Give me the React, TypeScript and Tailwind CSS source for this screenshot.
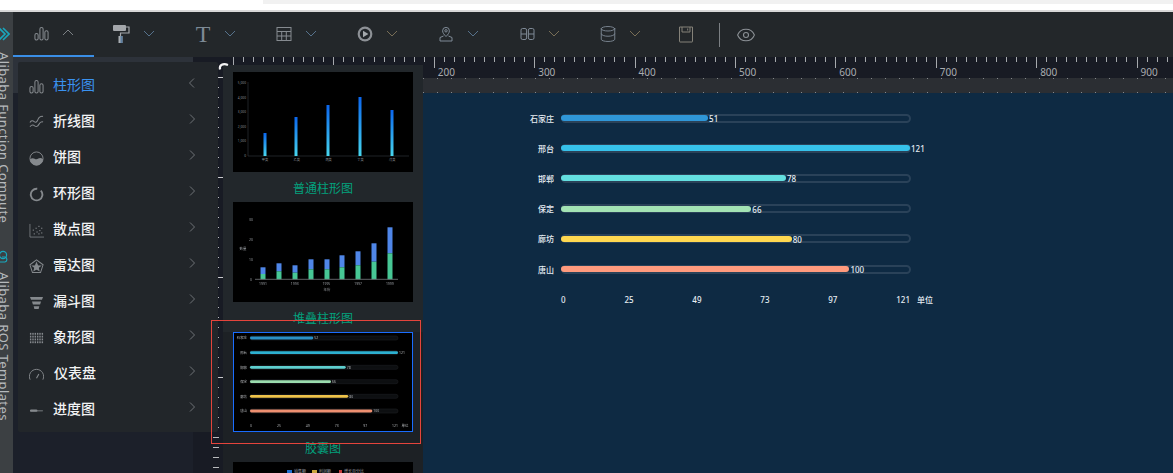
import { Database, Eye } from "lucide-react";

const cities = [
  { name: "石家庄", value: 51, color: "#2f97d8" },
  { name: "邢台", value: 121, color: "#36c1ea" },
  { name: "邯郸", value: 78, color: "#63dfe0" },
  { name: "保定", value: 66, color: "#a3e3b4" },
  { name: "廊坊", value: 80, color: "#ffd850" },
  { name: "唐山", value: 100, color: "#ff9a7d" },
];

const axis = ["0", "25", "49", "73", "97", "121"];

function Chevron({ dir, color = "#62727f" }: { dir: "up" | "down" | "left" | "right"; color?: string }) {
  const d = {
    up: "M2 9 L7 4 L12 9",
    down: "M2 5 L7 10 L12 5",
    left: "M9 2.5 L4.5 7 L9 11.5",
    right: "M5 2.5 L9.5 7 L5 11.5",
  }[dir];
  return (
    <svg width="14" height="14" viewBox="0 0 14 14" fill="none" stroke={color} strokeWidth="1">
      <path d={d} />
    </svg>
  );
}

function BarsIcon({ size = 16, color = "#8f9498" }: { size?: number; color?: string }) {
  return (
    <svg width={size} height={size} viewBox="0 0 16 16" fill="none" stroke={color} strokeWidth="1.1">
      <rect x="1" y="8" width="3.4" height="7" rx="1.7" />
      <rect x="6.3" y="1.5" width="3.4" height="13.5" rx="1.7" />
      <rect x="11.6" y="5" width="3.4" height="10" rx="1.7" />
    </svg>
  );
}

function RollerIcon() {
  return (
    <svg width="20" height="20" viewBox="0 0 20 20" fill="none">
      <rect x="1" y="1" width="13" height="6" rx="1" fill="#a4a7ab" />
      <path d="M14 3 H17 V9 H8.5 V12" stroke="#a4a7ab" strokeWidth="1.2" />
      <rect x="6.5" y="12" width="4" height="7" fill="#a8adb2" />
      <rect x="8.5" y="12" width="2" height="7" fill="#5c7ea0" />
    </svg>
  );
}

function TableIcon() {
  return (
    <svg width="16" height="16" viewBox="0 0 16 16" fill="none" stroke="#868b90" strokeWidth="1">
      <rect x="1" y="1.5" width="14" height="13" />
      <path d="M1 5.5 H15 M1 10 H15 M5.7 5.5 V14.5 M10.3 5.5 V14.5" />
    </svg>
  );
}

function PlayIcon() {
  return (
    <svg width="16" height="16" viewBox="0 0 16 16">
      <circle cx="8" cy="8" r="7.4" fill="#8d9196" />
      <circle cx="8" cy="8" r="5.2" fill="#22262a" />
      <path d="M6 4.8 L11.4 8 L6 11.2 Z" fill="#a5a9ad" />
    </svg>
  );
}

function PinIcon() {
  return (
    <svg width="16" height="16" viewBox="0 0 16 16" fill="none" stroke="#7f8a96" strokeWidth="1">
      <path d="M8 10.5 C6 8.5 4.6 6.8 4.6 4.8 A3.4 3.4 0 0 1 11.4 4.8 C11.4 6.8 10 8.5 8 10.5 Z" />
      <circle cx="8" cy="4.8" r="1.2" />
      <path d="M5.5 10 L2 11.5 V15 H14 V11.5 L10.5 10" />
    </svg>
  );
}

function DigitsIcon() {
  return (
    <svg width="15" height="16" viewBox="0 0 15 16" fill="none" stroke="#7f8a96" strokeWidth="1">
      <rect x="1" y="2.5" width="5.6" height="11" rx="1.6" />
      <path d="M1 8 H6.6" />
      <rect x="8.4" y="2.5" width="5.6" height="11" rx="1.6" />
      <path d="M8.4 8 H14" />
    </svg>
  );
}

function SaveIcon() {
  return (
    <svg width="16" height="17" viewBox="0 0 16 17" fill="none" stroke="#858279" strokeWidth="1">
      <path d="M1.5 1 H14.5 V15.5 Q14.5 16 14 16 H2 Q1.5 16 1.5 15.5 Z" />
      <path d="M4 1 V6 H12 V1 M9.7 2.5 V4.5" />
    </svg>
  );
}

function MenuIcon({ name }: { name: string }) {
  const c = "#85898d";
  if (name === "bar") return <BarsIcon size={15} color={c} />;
  const parts: Record<string, React.ReactNode> = {
    line: (
      <g fill="none" stroke={c} strokeWidth="1.1">
        <path d="M1 8 Q3 5 5.5 7 T9.5 5 T15 1.5" />
        <path d="M1 12.5 Q3.5 9.5 6 11.5 T10.5 10 T15 7.5" />
      </g>
    ),
    pie: (
      <g>
        <circle cx="8" cy="8" r="7" fill="none" stroke={c} strokeWidth="1" />
        <path d="M1 8.5 Q4 7 6 8.2 T10 8 T15 8.5 A7 7 0 0 1 1 8.5 Z" fill={c} />
      </g>
    ),
    ring: <path d="M12.6 3.8 A6.2 6.2 0 1 1 8.8 1.9" fill="none" stroke={c} strokeWidth="2" />,
    scatter: (
      <g fill={c}>
        <path d="M1 1 V15 H16" fill="none" stroke={c} strokeWidth="0.8" />
        <rect x="4" y="7" width="1.2" height="1.2" />
        <rect x="7" y="5" width="1.2" height="1.2" />
        <rect x="10" y="3" width="1.2" height="1.2" />
        <rect x="13" y="5" width="1.2" height="1.2" />
        <rect x="5" y="11" width="1.2" height="1.2" />
        <rect x="8" y="9" width="1.2" height="1.2" />
        <rect x="11" y="7.5" width="1.2" height="1.2" />
        <rect x="13" y="10" width="1.2" height="1.2" />
        <rect x="10" y="11" width="1.2" height="1.2" />
      </g>
    ),
    radar: (
      <g fill="none" stroke={c} strokeWidth="1.1">
        <path d="M8 1 L15 6.2 L12.3 14.5 H3.7 L1 6.2 Z" />
        <path d="M8 4.2 L9.2 7.2 L12.2 7.4 L9.8 9.3 L10.6 12.2 L8 10.6 L5.4 12.2 L6.2 9.3 L3.8 7.4 L6.8 7.2 Z" fill={c} />
      </g>
    ),
    funnel: (
      <g fill={c}>
        <path d="M1 2 H15 L13.8 5 H2.2 Z" />
        <path d="M3.2 7 H12.8 L11.8 10 H4.2 Z" />
        <path d="M5 12 H11 L10.3 15 H5.7 Z" />
      </g>
    ),
    picto: (
      <g fill={c}>
        {[2, 5, 8, 11].flatMap((y) =>
          [1, 3.5, 6, 8.5, 11, 13.5].map((x) => <rect key={`${x}-${y}`} x={x} y={y} width="1.5" height="2" />),
        )}
      </g>
    ),
    gauge: (
      <g fill="none" stroke={c} strokeWidth="1">
        <path d="M1.2 13.5 A7.6 7.6 0 1 1 14.8 13.5" />
        <path d="M8 12 L10.5 7.5" strokeWidth="1.2" />
      </g>
    ),
    progress: (
      <g>
        <rect x="1" y="7.5" width="14" height="1.5" rx="0.7" fill="#5a5e62" />
        <rect x="1" y="7" width="8" height="2.4" rx="1.2" fill={c} />
      </g>
    ),
  };
  return (
    <svg width="15" height="15" viewBox="0 0 16 16">
      {parts[name]}
    </svg>
  );
}

const menu = [
  { label: "柱形图", icon: "bar" },
  { label: "折线图", icon: "line" },
  { label: "饼图", icon: "pie" },
  { label: "环形图", icon: "ring" },
  { label: "散点图", icon: "scatter" },
  { label: "雷达图", icon: "radar" },
  { label: "漏斗图", icon: "funnel" },
  { label: "象形图", icon: "picto" },
  { label: "仪表盘", icon: "gauge" },
  { label: "进度图", icon: "progress" },
];

function ToolItem({ icon, active, chevron = "#62727f" }: { icon: React.ReactNode; active?: boolean; chevron?: string }) {
  return (
    <div className={active ? "flex h-full w-[81px] items-center border-b-2 border-[#3a8ee6] pl-[18px]" : "flex h-full w-[81px] items-center border-b-2 border-transparent pl-[18px]"}>
      <div className="flex w-[20px] justify-center">{icon}</div>
      <div className="ml-[10px] mb-[2px]">
        <Chevron dir={active ? "up" : "down"} color={active ? "#7c8185" : chevron} />
      </div>
    </div>
  );
}

function NormalBarThumb() {
  const bars = [
    { x: 32, top: 61 },
    { x: 63, top: 45 },
    { x: 95, top: 33 },
    { x: 127, top: 25 },
    { x: 159, top: 38 },
  ];
  return (
    <svg width="180" height="100" viewBox="0 0 180 100" className="block bg-black">
      <defs>
        <linearGradient id="thumbBar" x1="0" y1="0" x2="0" y2="1">
          <stop offset="0" stopColor="#0b66ee" />
          <stop offset="1" stopColor="#47d6ee" />
        </linearGradient>
      </defs>
      <path d="M15 10 V84 H176" fill="none" stroke="#2b3138" strokeWidth="0.7" />
      {["5,000", "4,000", "3,000", "2,000", "1,000", "0"].map((t, i) => (
        <text key={t} x="13" y={12 + i * 14.6} textAnchor="end" fontSize="3.2" fill="#8a8f95">
          {t}
        </text>
      ))}
      {bars.map((b) => (
        <rect key={b.x} x={b.x - 1.5} y={b.top} width="3" height={84 - b.top} fill="url(#thumbBar)" />
      ))}
      {["甲类", "乙类", "丙类", "丁类", "戊类"].map((t, i) => (
        <text key={t} x={32 + i * 31.8} y="89" textAnchor="middle" fontSize="3.2" fill="#8a8f95">
          {t}
        </text>
      ))}
    </svg>
  );
}

function StackBarThumb() {
  const bars = [
    [30, 65.3, 72],
    [46, 61.3, 69.3],
    [62, 63.3, 70.7],
    [78, 57.3, 67.3],
    [94, 57.3, 67.3],
    [109, 53.3, 65.3],
    [125, 49.3, 63.3],
    [141, 41.3, 59.7],
    [157, 25.3, 51.3],
  ];
  return (
    <svg width="180" height="100" viewBox="0 0 180 100" className="block bg-black blur-[0.4px]">
      {["30", "20", "10", "0"].map((t, i) => (
        <text key={t} x="18" y={18.5 + i * 20} textAnchor="middle" fontSize="3.4" fill="#9a9ea3">
          {t}
        </text>
      ))}
      <text x="10" y="48" textAnchor="middle" fontSize="3.4" fill="#9a9ea3">
        数量
      </text>
      {bars.map(([x, top, mid]) => (
        <g key={x}>
          <rect x={x - 2.5} y={top} width="5" height={mid - top} fill="#4f86e8" />
          <rect x={x - 2.5} y={mid} width="5" height={77.3 - mid} fill="#47c795" />
        </g>
      ))}
      <path d="M22 77.3 H165" stroke="#777b80" strokeWidth="0.8" />
      {["1991", "1993", "1995", "1997", "1999"].map((t, i) => (
        <text key={t} x={30 + i * 31.7} y="83" textAnchor="middle" fontSize="3.4" fill="#9a9ea3">
          {t}
        </text>
      ))}
      <text x="94" y="89" textAnchor="middle" fontSize="3.4" fill="#9a9ea3">
        年份
      </text>
    </svg>
  );
}

function CapsuleThumb() {
  const rows = [
    { name: "石家庄", end: 80.3, c: "#2a8fc5", y: 6 },
    { name: "邢台", end: 165, c: "#2db0d0", y: 20.7 },
    { name: "邯郸", end: 112.7, c: "#5fcfcf", y: 35.3 },
    { name: "保定", end: 98, c: "#9bdcae", y: 49.7 },
    { name: "廊坊", end: 115.3, c: "#eec24a", y: 64.3 },
    { name: "唐山", end: 139.3, c: "#ee8f70", y: 79 },
  ];
  return (
    <svg width="178" height="98" viewBox="1 1 178 98" className="block bg-black blur-[0.4px]">
      {rows.map((r) => (
        <g key={r.name}>
          <text x="14" y={r.y + 1.2} textAnchor="end" fontSize="3.4" fill="#b0b3b6">
            {r.name}
          </text>
          <rect x="17" y={r.y - 2} width="148" height="4" rx="2" fill="#0d0f11" stroke="#1c1f22" strokeWidth="0.6" />
          <rect x="17" y={r.y - 1.4} width={r.end - 17} height="2.8" rx="1.4" fill={r.c} />
          <text x={r.end + 1} y={r.y + 1.2} fontSize="3.4" fill="#b0b3b6">
            {Math.round(((r.end - 17) / 148) * 121)}
          </text>
        </g>
      ))}
      {[18, 46, 74.7, 103.7, 132.3, 162].map((x, i) => (
        <text key={x} x={x} y="95" textAnchor="middle" fontSize="3.4" fill="#b0b3b6">
          {axis[i]}
        </text>
      ))}
      <text x="172" y="95" textAnchor="middle" fontSize="3.4" fill="#b0b3b6">
        单位
      </text>
    </svg>
  );
}

function LegendThumb() {
  return (
    <svg width="180" height="100" viewBox="0 0 180 100" className="block bg-black">
      <rect x="54" y="8" width="5" height="3" fill="#1f6fd0" />
      <text x="61" y="11" fontSize="4" fill="#9a9ea3">
        销售额
      </text>
      <rect x="79" y="8" width="5" height="3" fill="#c9a53c" />
      <text x="86" y="11" fontSize="4" fill="#9a9ea3">
        利润额
      </text>
      <rect x="106" y="8" width="3" height="3" fill="#c23b3b" />
      <text x="111" y="11" fontSize="4" fill="#9a9ea3">
        增长百分比
      </text>
    </svg>
  );
}

export default function App() {
  return (
    <div className="flex h-[473px] w-[1173px] flex-col overflow-hidden bg-[#1c202a] font-['Noto_Sans','Noto_Sans_CJK_SC',sans-serif]">
      {/* browser strip */}
      <div className="h-[10px] shrink-0 bg-white">
        <div className="ml-[263px] h-[4px] bg-[#f1f1f1]" />
      </div>
      <div className="h-[2px] shrink-0 bg-[#d8d8d8]" />

      <div className="flex min-h-0 flex-1">
        {/* editor side tabs */}
        <aside className="flex w-[13px] shrink-0 flex-col overflow-hidden bg-[#3c4043] pt-[15px] text-[#b5b9bc]">
          <svg width="10" height="14" viewBox="0 0 10 14" fill="none" stroke="#19a7bd" strokeWidth="1.6" className="shrink-0">
            <path d="M-1 1 L5 7 L-1 13 M3 1 L9 7 L3 13" />
          </svg>
          <div className="mt-[11px] ml-[-7px] h-[198px] shrink-0 overflow-hidden text-[13px] leading-[18px] tracking-[0.4px] whitespace-nowrap [writing-mode:vertical-rl]">
            Alibaba Function Compute
          </div>
          <svg width="10" height="15" viewBox="0 0 10 15" fill="none" stroke="#19a7bd" strokeWidth="1.2" className="shrink-0">
            <circle cx="3" cy="5" r="3.6" />
            <path d="M-1 12 H5 A2.6 2.6 0 0 0 5 7 H2" />
          </svg>
          <div className="mt-[7px] ml-[-7px] shrink-0 text-[13px] leading-[18px] tracking-[0.4px] whitespace-nowrap [writing-mode:vertical-rl]">
            Alibaba ROS Templates
          </div>
        </aside>

        <div className="flex min-w-0 flex-1 flex-col">
          {/* toolbar */}
          <div className="flex h-[45px] shrink-0 items-center bg-[#23272a]">
            <ToolItem active icon={<BarsIcon size={15} color="#868b90" />} />
            <ToolItem icon={<RollerIcon />} chevron="#56728c" />
            <ToolItem icon={<span className="font-['Liberation_Serif',serif] text-[24px] leading-none text-[#7d8a96]">T</span>} chevron="#56728c" />
            <ToolItem icon={<TableIcon />} chevron="#56728c" />
            <ToolItem icon={<PlayIcon />} chevron="#786e56" />
            <ToolItem icon={<PinIcon />} chevron="#56728c" />
            <ToolItem icon={<DigitsIcon />} chevron="#786e56" />
            <ToolItem icon={<Database size={18} color="#7f8a96" strokeWidth={1.2} />} chevron="#786e56" />
            <div className="ml-[17px] flex h-full items-center">
              <SaveIcon />
            </div>
            <div className="ml-[25px] h-[24px] w-px bg-[#7b7f83]" />
            <div className="ml-[16px]">
              <Eye size={20} color="#8b9095" strokeWidth={1.3} />
            </div>
          </div>

          <div className="relative flex min-h-0 flex-1 flex-col">
            {/* horizontal ruler */}
            <div className="flex h-[21px] shrink-0">
              <div className="w-[180px] shrink-0 bg-[#2d323a]" />
              <div className="flex flex-1 overflow-hidden bg-[#181b24] pl-[40px]">
                {Array.from({ length: 10 }, (_, n) => (
                  <div key={n} className="w-[100.4px] shrink-0">
                    <div className="flex h-[11px] items-start">
                      {Array.from({ length: 10 }, (_, i) => (
                        <div key={i} className={i === 0 ? "h-[11px] w-[10.04px] shrink-0 border-l border-[#a6a9ad]" : "h-[5px] w-[10.04px] shrink-0 border-l border-[#a6a9ad]"} />
                      ))}
                    </div>
                    <div className="-mt-px pl-[4px] text-[10px] leading-[10px] text-[#a9acb0]">{n * 100}</div>
                  </div>
                ))}
              </div>
            </div>

            <div className="flex min-h-0 flex-1">
              <div className="w-[180px] shrink-0">
                <div className="h-[15px] bg-[#2d323a]" />
              </div>
              {/* vertical ruler */}
              <div className="-mt-px w-[30px] shrink-0 overflow-hidden bg-[#181b24]">
                {Array.from({ length: 40 }, (_, i) => (
                  <div key={i} className="h-[10px]">
                    <div className={i % 10 === 0 ? "ml-[20px] h-px w-[10px] bg-[#c8c9cb]" : "ml-[20px] h-px w-[6px] bg-[#b9babd]"} />
                  </div>
                ))}
              </div>
              <div className="w-[200px] shrink-0" />

              {/* canvas */}
              <div className="flex min-w-0 flex-1 flex-col">
                <div className="flex h-[15px] shrink-0 flex-col justify-between bg-[#2b2e33]">
                  <div className="h-px bg-[linear-gradient(90deg,#85888c_1px,transparent_1px)] bg-[length:14px_1px]" />
                  <div className="h-px bg-[linear-gradient(90deg,#85888c_1px,transparent_1px)] bg-[length:14px_1px]" />
                </div>
                <div className="flex-1 bg-[#0e2a43] pt-[10px] text-[8px] font-medium text-[#e6edf3]">
                  {cities.map((c) => (
                    <div key={c.name} className="flex h-[30.2px] items-center">
                      <div className="w-[131px] pt-px text-right leading-none">{c.name}</div>
                      <div className="ml-[7px] flex h-[9px] w-[350px] items-center rounded-full border-2 border-[#2a4259]">
                        <div className="-ml-[2px] h-[6px] shrink-0 rounded-full" style={{ width: `${(c.value / 121) * 349}px`, backgroundColor: c.color }} />
                        <span className="ml-px shrink-0 pt-[2px] leading-none">{c.value}</span>
                      </div>
                    </div>
                  ))}
                  <div className="mt-[12px] ml-[138px] flex w-[375px] leading-none">
                    <div className="flex w-[349px] justify-between">
                      {axis.map((t) => (
                        <span key={t}>{t}</span>
                      ))}
                    </div>
                    <span className="ml-[7px]">单位</span>
                  </div>
                </div>
              </div>
            </div>

            {/* chart type dropdown */}
            <div className="absolute top-[5px] left-[5px] z-10 h-[370px] w-[200px] rounded-[2px] bg-[#22262a] pt-[4px]">
              {menu.map((m, i) => (
                <div key={m.label} className="flex h-[36px] items-center pr-[19px] pl-[11px]">
                  <div className="mt-[5px]">
                    <MenuIcon name={m.icon} />
                  </div>
                  <span className={i === 0 ? "ml-[9px] flex-1 text-[14px] text-[#3a92f0]" : m.icon === "gauge" ? "ml-[10px] flex-1 text-[14px] font-medium text-[#f2f3f4]" : "ml-[9px] flex-1 text-[14px] font-medium text-[#f2f3f4]"}>
                    {m.label}
                  </span>
                  <div className="mb-[2px]">
                    <Chevron dir={i === 0 ? "left" : "right"} color="#6e7276" />
                  </div>
                </div>
              ))}
            </div>

            {/* thumbnails */}
            <div className="absolute top-[8px] left-[210px] z-10 bottom-0 w-[200px] overflow-hidden bg-[#22272b] pt-[7px]">
              <div className="px-[10px]">
                <NormalBarThumb />
                <div className="h-[30px] pt-[9px] text-center text-[12px] leading-[16px] text-[#02a27e]">普通柱形图</div>
                <StackBarThumb />
                <div className="h-[30px] pt-[9px] text-center text-[12px] leading-[16px] text-[#02a27e]">堆叠柱形图</div>
              </div>
              <div className="h-full bg-[#1d2125] px-[10px]">
                <div className="h-[100px] border border-[#1a6dff]">
                  <CapsuleThumb />
                </div>
                <div className="h-[30px] pt-[9px] text-center text-[12px] leading-[16px] text-[#02a27e]">胶囊图</div>
                <LegendThumb />
              </div>
            </div>

            {/* rotate handle */}
            <svg width="11" height="9" viewBox="0 0 11 9" fill="none" stroke="#f4f4f4" strokeWidth="2.2" className="absolute top-[5px] left-[205px] z-20">
              <path d="M2 7.5 C1 3 5 1 10 3" />
            </svg>

            {/* selection */}
            <div className="absolute top-[263px] left-[198px] z-20 h-[124px] w-[210px] border border-[#e5443c]" />
          </div>
        </div>
      </div>
    </div>
  );
}
